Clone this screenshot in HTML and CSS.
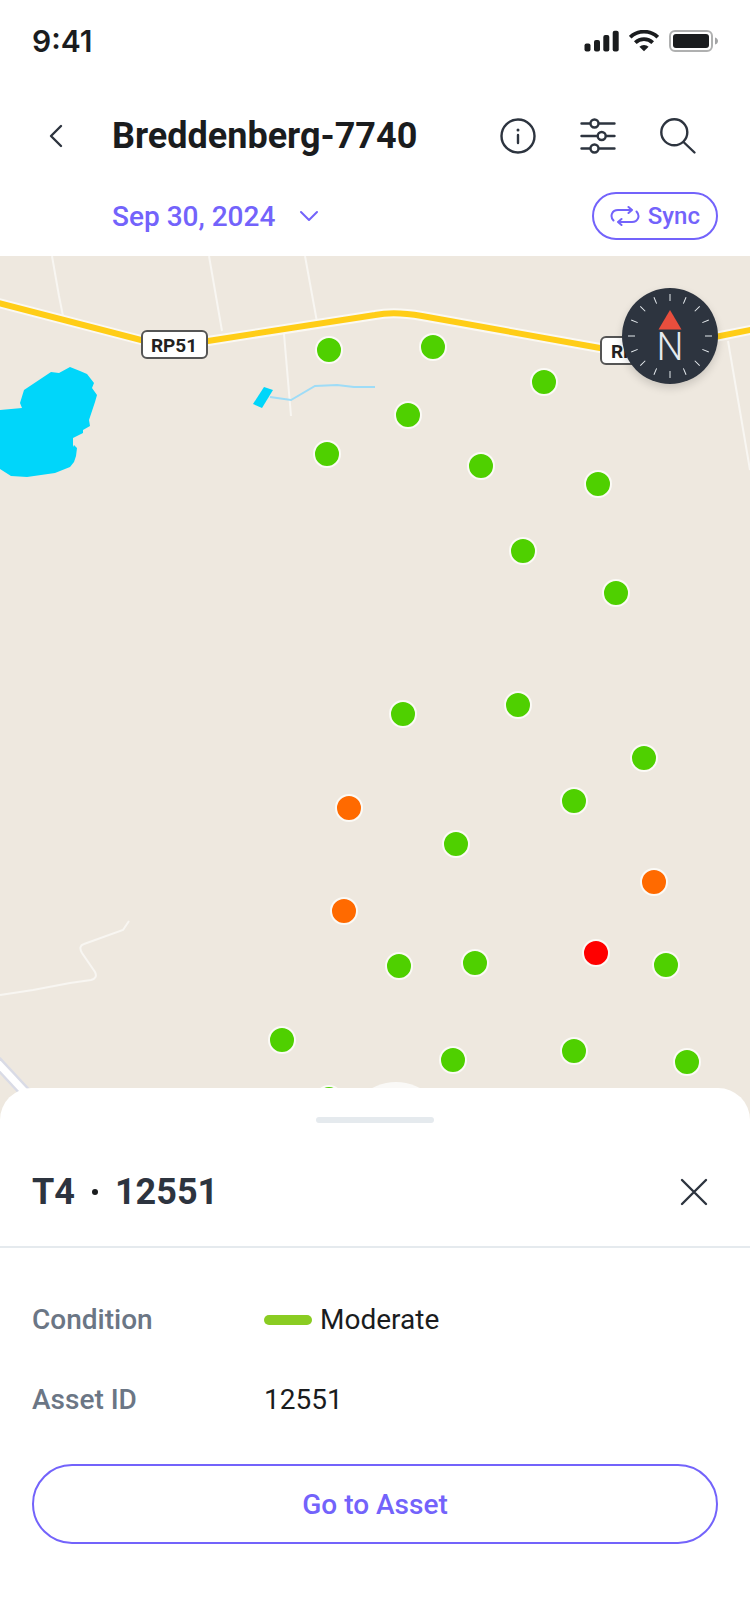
FILE: index.html
```html
<!DOCTYPE html>
<html lang="en">
<head>
    <meta charset="UTF-8">
    <meta name="viewport" content="width=device-width, initial-scale=1.0">
    <title>Breddenberg-7740</title>
    <link rel="stylesheet" href="styles.css">
</head>
<body>
    <div class="status-bar">
        <span class="time">9:41</span>
        <div class="status-icons">
            <svg width="35" height="22" viewBox="0 0 35 22" fill="#1a1c1e">
                <rect x="0.5" y="13.5" width="6" height="8" rx="2"/>
                <rect x="10" y="10" width="6" height="11.5" rx="2"/>
                <rect x="19.300" y="5" width="6" height="16.5" rx="2"/>
                <rect x="28.7" y="0.7" width="6" height="20.8" rx="2"/>
            </svg>
            <svg width="30" height="22" viewBox="0 0 30 22" fill="none" stroke="#1a1c1e" stroke-width="3.8">
                <path d="M1.2 7.2A20 20 0 0 1 28.8 7.2"/>
                <path d="M6.3 12.6A12.6 12.6 0 0 1 23.7 12.6"/>
                <path d="M10.4 16.800A6.8 6.8 0 0 1 19.6 16.800L15 21.300Z" fill="#1a1c1e" stroke="none"/>
            </svg>
            <svg width="49" height="22" viewBox="0 0 49 22">
                <rect x="1" y="1" width="42" height="20" rx="5" fill="none" stroke="#1a1c1e" stroke-opacity=".35" stroke-width="2"/>
                <rect x="4" y="4" width="36" height="14" rx="3" fill="#1a1c1e"/>
                <path d="M46 7.5C48 8 49 9.5 49 11S48 14 46 14.5Z" fill="#1a1c1e" fill-opacity=".4"/>
            </svg>
        </div>
    </div>

    <header class="header">
        <div class="title-row">
            <button class="icon-btn" aria-label="Back">
                <svg width="48" height="48" viewBox="0 0 48 48"><path d="M29 14L19 24L29 34"/></svg>
            </button>
            <h1>Breddenberg-7740</h1>
            <div class="actions">
                <button class="icon-btn" aria-label="Info">
                    <svg width="48" height="48" viewBox="0 0 48 48">
                        <circle cx="24" cy="24" r="16.5"/>
                        <path d="M24 23V31"/>
                        <circle cx="24" cy="18" r="1.5" class="solid"/>
                    </svg>
                </button>
                <button class="icon-btn" aria-label="Filters">
                    <svg width="48" height="48" viewBox="0 0 48 48">
                        <path d="M7.5 11.5H16M25 11.5H40.5M7.5 24H23.5M32 24H40.5M7.5 36.5H16M25 36.5H40.5"/>
                        <circle cx="20.5" cy="11.5" r="4"/>
                        <circle cx="27.7" cy="24" r="4"/>
                        <circle cx="20.5" cy="36.5" r="4"/>
                    </svg>
                </button>
                <button class="icon-btn" aria-label="Search">
                    <svg width="48" height="48" viewBox="0 0 48 48">
                        <circle cx="20.3" cy="20.3" r="13"/>
                        <path d="M30 30.5L40.5 40.5"/>
                    </svg>
                </button>
            </div>
        </div>
        <div class="date-row">
            <button class="date-btn">
                Sep 30, 2024
                <svg width="20" height="12" viewBox="0 0 20 12"><path d="M2 2L10 10L18 2"/></svg>
            </button>
            <button class="sync-btn">
                <svg width="30" height="22" viewBox="0 0 30 22">
                    <path d="M3.500 15.500C-.5 11 2 5 8 5H22M18.500 2L22 5L18.500 8"/>
                    <path d="M26.500 6.500C30.500 11 28 17 22 17H8M11.500 14L8 17L11.500 20"/>
                </svg>
                Sync
            </button>
        </div>
    </header>

    <main class="map">
        <svg class="map-canvas" viewBox="0 0 750 872" preserveAspectRatio="xMinYMin slice">
            <!-- Tracks -->
            <g class="track">
                <path d="M52 0L59 40L63 60M209 0L222 75M305 0L317 66M284 78L291 160M728 85L750 214"/>
                <path d="M0 739L33 734L70 727L91 724Q98 722 95 716L82 697Q78 690 84 688L123 674L129 665"/>
            </g>
            <path class="lane-edge" d="M-4 805L36 848"/>
            <path class="lane" d="M-4 805L36 848"/>

            <!-- Water -->
            <path class="water" d="M0 154L22 152L20 147L24 134L51 116L59 117L70 111L80 115L87 118L94 127L92 132L97 139L95 146L89 164L90 170L83 174L83 177L73 182V191L74 189L77 192L76 200L74 206L70 211L55 217L27 221L11 220L0 213Z"/>
            <path class="water" d="M264 131L273 134L262 152L253 148Z"/>
            <path class="stream" d="M270 141L291 144L315 130L337 129L354 131H375"/>

            <!-- RP51 -->
            <path class="road-edge" d="M-5 46L141 84Q174 91 208 85L375 59Q394 55 422 60L600 92Q640 98 700 84L755 73"/>
            <path class="road" d="M-5 46L141 84Q174 91 208 85L375 59Q394 55 422 60L600 92Q640 98 700 84L755 73"/>
            <g class="shield">
                <rect x="142" y="75" width="65" height="27" rx="5"/>
                <text x="174" y="96">RP51</text>
                <rect x="601" y="81" width="65" height="27" rx="5"/>
                <text x="634" y="102">RP51</text>
            </g>

            <!-- Assets -->
            <g class="pin good">
                <circle cx="329" cy="94" r="13"/>
                <circle cx="433" cy="91" r="13"/>
                <circle cx="544" cy="126" r="13"/>
                <circle cx="408" cy="159" r="13"/>
                <circle cx="327" cy="198" r="13"/>
                <circle cx="481" cy="210" r="13"/>
                <circle cx="598" cy="228" r="13"/>
                <circle cx="523" cy="295" r="13"/>
                <circle cx="616" cy="337" r="13"/>
                <circle cx="403" cy="458" r="13"/>
                <circle cx="518" cy="449" r="13"/>
                <circle cx="644" cy="502" r="13"/>
                <circle cx="574" cy="545" r="13"/>
                <circle cx="456" cy="588" r="13"/>
                <circle cx="399" cy="710" r="13"/>
                <circle cx="475" cy="707" r="13"/>
                <circle cx="666" cy="709" r="13"/>
                <circle cx="282" cy="784" r="13"/>
                <circle cx="453" cy="804" r="13"/>
                <circle cx="574" cy="795" r="13"/>
                <circle cx="687" cy="806" r="13"/>
                <circle cx="329" cy="843" r="13"/>
            </g>
            <g class="pin warning">
                <circle cx="349" cy="552" r="13"/>
                <circle cx="654" cy="626" r="13"/>
                <circle cx="344" cy="655" r="13"/>
            </g>
            <g class="pin critical">
                <circle cx="596" cy="697" r="13"/>
            </g>
            <circle class="selected" cx="396" cy="877" r="51"/>
        </svg>

        <button class="compass" aria-label="Point map north">
            <svg width="96" height="96" viewBox="0 0 96 96">
                <g class="ticks">
                    <path id="tick" d="M48 6V13M48 83V90"/>
                    <use href="#tick" transform="rotate(22.5 48 48)"/>
                    <use href="#tick" transform="rotate(45 48 48)"/>
                    <use href="#tick" transform="rotate(67.5 48 48)"/>
                    <use href="#tick" transform="rotate(90 48 48)"/>
                    <use href="#tick" transform="rotate(112.5 48 48)"/>
                    <use href="#tick" transform="rotate(135 48 48)"/>
                    <use href="#tick" transform="rotate(157.5 48 48)"/>
                </g>
                <path class="needle" d="M48 22L59.5 41.5H36.5Z"/>
                <text x="48" y="72">N</text>
            </svg>
        </button>
    </main>

    <section class="sheet">
        <div class="handle"></div>
        <div class="sheet-header">
            <h2>T4 <span class="dot"></span> 12551</h2>
            <button class="icon-btn" aria-label="Close">
                <svg width="48" height="48" viewBox="0 0 48 48"><path d="M12 12L36 36M36 12L12 36"/></svg>
            </button>
        </div>
        <div class="sheet-body">
            <dl class="details">
                <dt>Condition</dt>
                <dd><span class="level"></span>Moderate</dd>
                <dt>Asset ID</dt>
                <dd>12551</dd>
            </dl>
            <button class="asset-btn">Go to Asset</button>
        </div>
    </section>
</body>
</html>
```
FILE: styles.css
```css
:root {
    --primary: #7363fb;
    --text: #1a1c1e;
    --icon: #2d343f;
    --muted: #6b7685;
    --line: #e5eaee;
    --land: #eee8df;
}

* {
    box-sizing: border-box;
}

body {
    margin: 0;
    min-height: 100vh;
    display: flex;
    flex-direction: column;
    font-family: Roboto, "Liberation Sans", sans-serif;
    font-size: 28px;
    color: var(--text);
    background: white;
}

h1, h2, dl, dd {
    margin: 0;
}

h1, h2 {
    font-size: 36px;
    line-height: 48px;
    font-weight: 700;
}

button {
    font: inherit;
    font-weight: 500;
    color: var(--primary);
    background: none;
    border: none;
    padding: 0;
    cursor: pointer;
}

svg {
    display: block;
}

/* Status bar */
.status-bar {
    display: flex;
    align-items: center;
    justify-content: space-between;
    height: 82px;
    padding: 0 32px;
}

.time {
    font-family: Inter, sans-serif;
    font-size: 30px;
    font-weight: 600;
}

.status-icons {
    display: flex;
    gap: 10px;
}

/* Header */
.header {
    padding: 22px 32px 16px;
}

.title-row,
.date-row,
.actions,
.date-btn,
.sync-btn {
    display: flex;
    align-items: center;
}

.title-row {
    height: 64px;
    gap: 32px;
}

.actions {
    gap: 32px;
    margin-left: auto;
    padding-right: 16px;
}

.icon-btn svg,
.date-btn svg,
.sync-btn svg {
    fill: none;
    stroke: var(--icon);
    stroke-width: 2.4;
    stroke-linecap: round;
    stroke-linejoin: round;
}

.icon-btn .solid {
    fill: var(--icon);
    stroke: none;
}

.date-row {
    justify-content: space-between;
    margin-top: 24px;
    padding-left: 80px;
}

.date-btn {
    gap: 24px;
}

.date-btn svg,
.sync-btn svg {
    stroke: var(--primary);
    stroke-width: 2;
}

.sync-btn {
    gap: 8px;
    height: 48px;
    padding: 0 16px;
    font-size: 24px;
    border: 2px solid var(--primary);
    border-radius: 24px;
}

/* Map */
.map {
    position: relative;
    flex: 1 0 400px;
    overflow: hidden;
    background: var(--land);
}

.map-canvas {
    position: absolute;
    width: 100%;
    height: 100%;
    fill: none;
}

.track {
    stroke: #f8f6f2;
    stroke-width: 2;
}

.lane-edge {
    stroke: #d9dbe6;
    stroke-width: 12;
}

.lane {
    stroke: white;
    stroke-width: 7;
}

.water {
    fill: #00d6fa;
}

.stream {
    stroke: #9edcf7;
    stroke-width: 2;
}

.road-edge {
    stroke: #faf8f3;
    stroke-width: 10;
}

.road {
    stroke: #ffcd17;
    stroke-width: 6;
}

.shield rect {
    fill: white;
    stroke: #555;
    stroke-width: 2;
}

.shield text {
    font-size: 19px;
    font-weight: 700;
    text-anchor: middle;
    fill: #222;
}

.pin {
    stroke: #fbfaf6;
    stroke-width: 2;
}

.good {
    fill: #4fd000;
}

.warning {
    fill: #ff6a00;
}

.critical {
    fill: #ff0000;
}

.selected {
    fill: #faf9f7;
}

.compass {
    position: absolute;
    top: 32px;
    right: 32px;
    border-radius: 50%;
    background: #2d343f;
    box-shadow: 0 4px 8px rgba(0, 0, 0, 0.15);
}

.ticks {
    stroke: #e5eaee;
    stroke-width: 1;
}

.needle {
    fill: #e94e3d;
}

.compass text {
    font-size: 38px;
    font-weight: 300;
    text-anchor: middle;
    fill: #e5eaee;
}

/* Bottom sheet */
.sheet {
    position: relative;
    margin-top: -40px;
    padding-top: 29px;
    background: white;
    border-radius: 32px 32px 0 0;
}

.handle {
    width: 118px;
    height: 6px;
    margin: 0 auto;
    border-radius: 3px;
    background: var(--line);
}

.sheet-header {
    display: flex;
    align-items: center;
    justify-content: space-between;
    height: 125px;
    padding: 14px 32px 0;
    border-bottom: 2px solid var(--line);
}

.sheet-header h2 {
    display: flex;
    align-items: center;
    gap: 17px;
    color: var(--icon);
}

.dot {
    width: 6px;
    height: 6px;
    border-radius: 50%;
    background: var(--text);
}

.sheet-body {
    padding: 32px 32px 80px;
}

.details {
    display: grid;
    grid-template-columns: 232px 1fr;
    line-height: 80px;
}

.details dt {
    font-weight: 500;
    color: var(--muted);
}

.details dd {
    display: flex;
    align-items: center;
    gap: 8px;
}

.level {
    width: 48px;
    height: 10px;
    border-radius: 5px;
    background: #8acc22;
}

.asset-btn {
    width: 100%;
    height: 80px;
    margin-top: 24px;
    border: 2px solid var(--primary);
    border-radius: 40px;
}
```
